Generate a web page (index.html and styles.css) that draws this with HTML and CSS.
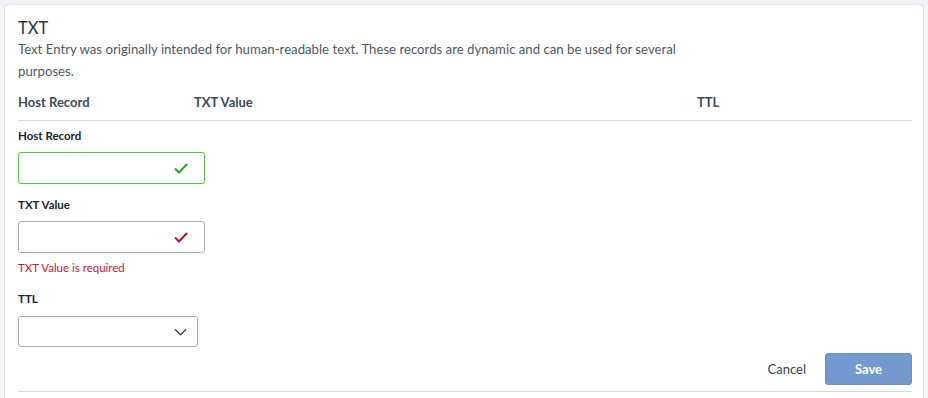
FILE: index.html
```html
<!DOCTYPE html>
<html>
<head>
<meta charset="utf-8">
<link rel="stylesheet" href="styles.css">
</head>
<body>
<div class="card">
  <h2 class="title">TXT</h2>
  <p class="desc">Text Entry was originally intended for human-readable text. These records are dynamic and can be used for several purposes.</p>
  <div class="cols">
    <div>Host Record</div>
    <div>TXT Value</div>
    <div>TTL</div>
  </div>
  <form class="form">
    <label class="label">Host Record</label>
    <div class="field field-ok">
      <input class="input" type="text">
      <svg class="mark" viewBox="0 0 14 14" width="14" height="14"><path d="M1 7.5 L5 11.5 L13 3" fill="none" stroke="#2aa52a" stroke-width="2"/></svg>
    </div>
    <label class="label label-gap">TXT Value</label>
    <div class="field field-bad">
      <input class="input" type="text">
      <svg class="mark" viewBox="0 0 14 14" width="14" height="14"><path d="M1 7.5 L5 11.5 L13 3" fill="none" stroke="#c0112a" stroke-width="2"/></svg>
    </div>
    <div class="error">TXT Value is required</div>
    <label class="label label-gap2">TTL</label>
    <div class="select">
      <svg class="chev" viewBox="0 0 14 8" width="13" height="8"><path d="M1 1 L7 7 L13 1" fill="none" stroke="#3d4656" stroke-width="1.4"/></svg>
    </div>
    <div class="actions">
      <button type="button" class="btn-link">Cancel</button>
      <button type="button" class="btn-save">Save</button>
    </div>
  </form>
</div>
</body>
</html>
```

FILE: styles.css
```css
html, body {
  margin: 0;
  padding: 0;
  background: #f1f3f6;
  font-family: Lato, "Open Sans", sans-serif;
}
.card {
  margin: 4px 4px 0 4px;
  background: #fff;
  border: 1px solid #dde2e8;
  border-bottom: none;
  border-radius: 4px 4px 0 0;
  padding: 13px 11px 20px 13px;
  height: 400px;
  box-sizing: border-box;
}
.title {
  margin: 0;
  font-size: 16.5px;
  line-height: 20px;
  font-weight: 400;
  color: #2c3644;
}
.desc {
  margin: 0;
  font-size: 13.2px;
  line-height: 22px;
  color: #4f5866;
  max-width: 672px;
}
.cols {
  display: grid;
  grid-template-columns: 176px 503px 1fr;
  margin-top: 11px;
  padding-bottom: 9px;
  border-bottom: 1px solid #d3d9e0;
  font-size: 13px;
  line-height: 18px;
  font-weight: 700;
  color: #3f4a5a;
}
.form {
  display: flex;
  flex-direction: column;
  align-items: flex-start;
}
.label {
  margin-top: 7px;
  font-size: 11.5px;
  line-height: 16px;
  font-weight: 700;
  color: #1c2430;
}
.label-gap { margin-top: 13px; }
.label-gap2 { margin-top: 15px; }
.field {
  position: relative;
  margin-top: 8px;
  width: 187px;
  height: 32px;
}
.input {
  width: 100%;
  height: 100%;
  box-sizing: border-box;
  border: 1px solid #a9b1bd;
  border-radius: 3px;
  background: #fff;
  outline: none;
  padding: 0 34px 0 10px;
  font: inherit;
}
.field-ok .input { border-color: #4cc24c; }
.mark {
  position: absolute;
  right: 17px;
  top: 9px;
}
.error {
  margin-top: 7px;
  font-size: 11.5px;
  line-height: 16px;
  color: #cf1235;
}
.select {
  margin-top: 9px;
  width: 180px;
  height: 31px;
  box-sizing: border-box;
  border: 1px solid #a9b1bd;
  border-radius: 3px;
  display: flex;
  align-items: center;
  justify-content: flex-end;
  padding-right: 10px;
}
.actions {
  align-self: stretch;
  display: flex;
  justify-content: flex-end;
  align-items: center;
  gap: 19px;
  margin-top: 6px;
  padding-bottom: 6px;
  border-bottom: 1px solid #d3d9e0;
}
.btn-link {
  background: none;
  border: none;
  padding: 0;
  font: inherit;
  font-size: 13px;
  color: #3a4352;
  cursor: pointer;
}
.btn-save {
  width: 87px;
  height: 32px;
  border: 1px solid #6b90c8;
  border-radius: 3px;
  background: #7399cf;
  color: #fff;
  font: inherit;
  font-size: 13px;
  font-weight: 700;
}
```
